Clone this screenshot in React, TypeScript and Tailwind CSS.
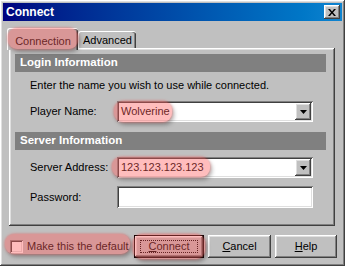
import React from "react"

// classic win9x bevels
const raised =
  "shadow-[inset_-1px_-1px_#404040,inset_1px_1px_#ffffff,inset_-2px_-2px_#808080,inset_2px_2px_#dfdfdf]"
const sunken =
  "shadow-[inset_1px_1px_#808080,inset_-1px_-1px_#ffffff,inset_2px_2px_#404040,inset_-2px_-2px_#dfdfdf]"
const mark =
  "pointer-events-none absolute rounded-[9px] bg-[rgba(255,90,90,0.4)] shadow-[0_0_3px_rgba(255,70,70,0.6),2px_3px_4px_rgba(0,0,0,0.3)]"

function Arrow() {
  return (
    <svg width="7" height="4" viewBox="0 0 7 4">
      <path d="M0 0h7L3.5 4z" fill="#000" />
    </svg>
  )
}

function Combo({ value, children }: { value: string; children?: React.ReactNode }) {
  return (
    <div className={`relative flex h-[21px] w-[196px] items-center bg-white ${sunken}`}>
      <span className="pl-[4px]">{value}</span>
      <div className={`ml-auto mr-[2px] flex h-[17px] w-[16px] items-center justify-center bg-[#c0c0c0] ${raised}`}>
        <Arrow />
      </div>
      {children}
    </div>
  )
}

function Header({ title }: { title: string }) {
  return (
    <div className="flex h-[18px] items-center bg-[#808080] pl-[5px] text-[11.5px] font-bold text-white">
      {title}
    </div>
  )
}

export default function App() {
  return (
    <div
      className={`flex h-[266px] w-[345px] flex-col bg-[#c0c0c0] p-[3px] font-['Liberation_Sans',Arial,sans-serif] text-[11px] text-black ${raised}`}
    >
      {/* TITLE BAR */}
      <div className="flex h-[18px] items-center justify-between bg-gradient-to-r from-[#000080] to-[#1084d0] pl-[3px] pr-[2px]">
        <span className="text-[12px] font-bold text-white">Connect</span>
        <div className={`flex h-[14px] w-[16px] items-center justify-center bg-[#c0c0c0] ${raised}`}>
          <svg width="8" height="7" viewBox="0 0 8 7">
            <path d="M0 0h2l2 2.5L6 0h2L5 3.5 8 7H6L4 4.5 2 7H0l3-3.5z" fill="#000" />
          </svg>
        </div>
      </div>

      {/* TABS */}
      <div className="ml-[4px] mt-[7px] flex h-[20px] items-start">
        <div className="relative z-10 flex h-[22px] w-[71px] items-start justify-center rounded-t-[3px] border-l border-t border-white bg-[#c0c0c0] pt-[4px] shadow-[inset_-1px_0_#404040,inset_-2px_0_#808080]">
          Connection
          <div className={`${mark} left-0 right-0 top-[-1px] h-[21px]`} />
        </div>
        <div className="mt-[3px] flex h-[17px] w-[58px] items-center justify-center rounded-t-[3px] border-l border-t border-white shadow-[inset_-1px_0_#404040,inset_-2px_0_#808080]">
          Advanced
        </div>
      </div>

      {/* PANEL */}
      <div className={`ml-[6px] flex h-[178px] w-[326px] flex-col pl-[6px] pr-[9px] pt-[6px] ${raised}`}>
        <Header title="Login Information" />
        <div className="mt-[7px] h-[13px] pl-[15px] leading-[13px]">
          Enter the name you wish to use while connected.
        </div>
        <div className="mt-[9px] flex items-center pl-[15px]">
          <span className="w-[87px]">Player Name:</span>
          <Combo value="Wolverine">
            <div className={`${mark} left-[-3px] top-0 h-[21px] w-[58px]`} />
          </Combo>
        </div>

        <div className="mt-[10px]">
          <Header title="Server Information" />
        </div>
        <div className="mt-[7px] flex items-center pl-[15px]">
          <span className="w-[87px]">Server Address:</span>
          <Combo value="123.123.123.123">
            <div className={`${mark} left-[-5px] top-0 h-[20px] w-[98px]`} />
          </Combo>
        </div>
        <div className="mt-[8px] flex items-center pl-[15px]">
          <span className="w-[87px]">Password:</span>
          <div className={`h-[22px] w-[196px] bg-white ${sunken}`} />
        </div>
      </div>

      {/* BOTTOM ROW */}
      <div className="mt-[9px] flex items-center">
        <div className="relative ml-[7px] flex items-center">
          <div className={`h-[13px] w-[13px] bg-white ${sunken}`} />
          <span className="ml-[4px] whitespace-nowrap">Make this the default</span>
          <div className={`${mark} left-[-5px] top-[-4px] h-[20px] w-[125px]`} />
        </div>
        <div className="ml-auto mr-[5px] flex gap-[4px]">
          <div className="relative h-[23px] w-[70px] border border-black">
            <div className={`flex h-full w-full items-center justify-center bg-[#c0c0c0] ${raised}`}>
              <div className="flex h-[13px] w-[58px] items-center justify-center border border-dotted border-black">
                <span><span className="underline">C</span>onnect</span>
              </div>
            </div>
            <div className={`${mark} left-[-2px] top-[-2px] h-[25px] w-[72px] rounded-[4px]`} />
          </div>
          <div className={`flex h-[23px] w-[63px] items-center justify-center bg-[#c0c0c0] ${raised}`}>
            <span><span className="underline">C</span>ancel</span>
          </div>
          <div className={`flex h-[23px] w-[62px] items-center justify-center bg-[#c0c0c0] ${raised}`}>
            <span><span className="underline">H</span>elp</span>
          </div>
        </div>
      </div>
    </div>
  )
}
